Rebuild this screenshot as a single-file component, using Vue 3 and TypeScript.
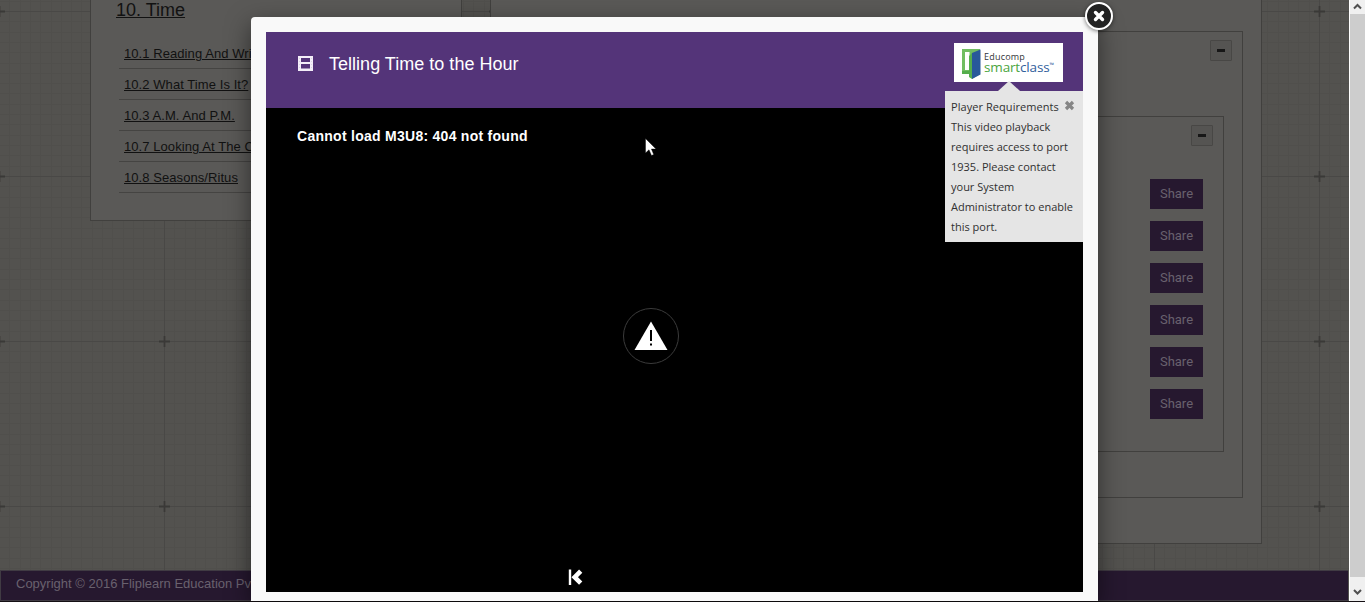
<script setup lang="ts">
const lessons: string[] = [
  '10.1 Reading And Writing Time',
  '10.2 What Time Is It?',
  '10.3 A.M. And P.M.',
  '10.7 Looking At The Calendar',
  '10.8 Seasons/Ritus',
]
const shares = 6
const minor = Array.from({ length: 15 }, (_, i) => ((Math.round((i + 1) * 10.3) + 82) % 165) + 0.5)
</script>

<template>
  <div class="window">
    <div class="page">
      <svg class="paper" width="1349" height="570">
        <defs>
          <pattern id="grid" x="-83" y="-71" width="165" height="165" patternUnits="userSpaceOnUse">
            <g stroke="#504f4c" stroke-width="1">
              <path v-for="m in minor" :key="m" :d="`M${m} 0V165M0 ${m}H165`" />
            </g>
            <path d="M82.5 0V165M0 82.5H165" stroke="#494846" />
            <path d="M77 82.5H88M82.5 77V88" stroke="#3a3937" stroke-width="1.8" />
          </pattern>
        </defs>
        <rect width="1349" height="570" fill="url(#grid)" />
      </svg>
      <main class="columns">
        <section class="chapter">
          <h2><a>10. Time</a></h2>
          <ul>
            <li v-for="l in lessons" :key="l"><a>{{ l }}</a></li>
          </ul>
        </section>
        <section class="content">
          <div class="group">
            <button class="fold"><i></i></button>
            <div class="topic">
              <button class="fold"><i></i></button>
              <div class="shares">
                <button v-for="n in shares" :key="n" class="share">Share</button>
              </div>
            </div>
          </div>
        </section>
      </main>
      <footer>Copyright © 2016 Fliplearn Education Pvt. Ltd.</footer>
    </div>

    <div class="scroll">
      <svg width="15" height="14" viewBox="0 0 15 14"><path d="M4 8.5L7.5 5L11 8.5" /></svg>
      <div class="thumb"></div>
      <svg width="15" height="24" viewBox="0 0 15 24"><path d="M4 13L7.5 16.5L11 13" /></svg>
    </div>

    <div class="modal">
      <header>
        <svg class="film" width="16" height="15" viewBox="0 0 16 15">
          <path d="M0 0H15V15H0Z" fill="#f3eef8" />
          <path d="M3 2H12V6H3ZM3 8H12V12.5H3Z" fill="#543479" />
          <path d="M1.5 2V14M13.5 2V14" stroke="#ddd2e7" stroke-dasharray="1 2" />
        </svg>
        <h1>Telling Time to the Hour</h1>
        <div class="logo">
          <svg width="20" height="32" viewBox="0 0 20 32">
            <path d="M0 0H18V25L10 30V25H0Z" fill="#71bd62" />
            <path d="M3 3H7.5V21H3Z" fill="#fff" />
            <path d="M0 22H7V7L10 4V30L7 28V25H0Z" fill="#55ae4c" />
            <path d="M10 4L18.5 .5V25.5L10 30Z" fill="#28599a" />
          </svg>
          <div class="words">
            <div class="brand">Educomp</div>
            <div class="name"><span>smart</span><span class="class">class</span><span class="tm">™</span></div>
          </div>
        </div>
      </header>
      <div class="video">
        <p class="error">Cannot load M3U8: 404 not found</p>
        <svg class="warn" width="56" height="56" viewBox="0 0 56 56">
          <circle cx="28" cy="28" r="27.5" fill="none" stroke="#3b3b3b" />
          <path d="M28 13.5L44.5 42H11.5Z" fill="#fff" />
          <path d="M27 22H29V33H27ZM27 35.5H29V37.5H27Z" fill="#000" />
        </svg>
        <svg class="prev" width="15" height="17" viewBox="0 0 15 17">
          <path d="M2 .5V16" stroke="#fff" stroke-width="2.4" />
          <path d="M12.7 2.2L6.7 8.2L12.7 14.2" fill="none" stroke="#fff" stroke-width="4.6" />
        </svg>
      </div>
      <aside class="tip">
        <span class="tip-title">Player Requirements</span>
        <svg class="dismiss" width="11" height="11" viewBox="0 0 11 11"><path d="M2 2L9 9M9 2L2 9" stroke="#858585" stroke-width="3.2" /></svg>
        <div>This video playback<br />requires access to port<br />1935. Please contact<br />your System<br />Administrator to enable<br />this port.</div>
      </aside>
      <svg class="close" width="32" height="32" viewBox="0 0 32 32">
        <circle cx="16" cy="16" r="13" fill="#222" stroke="#fff" stroke-width="2" />
        <path d="M12.5 12.5L19.5 19.5M19.5 12.5L12.5 19.5" stroke="#fff" stroke-width="3.4" stroke-linecap="round" />
      </svg>
      <svg class="cursor" width="12" height="19" viewBox="0 0 12 19">
        <path d="M.5 .5V15L4 11.8L6.5 17.5L8.7 16.5L6.4 11H11Z" fill="#fff" stroke="#000" stroke-width=".4" />
      </svg>
    </div>
  </div>
</template>

<style>
html, body { margin: 0; overflow: hidden; background: #151014; }
</style>

<style scoped>
* { box-sizing: border-box; margin: 0; padding: 0; }
.window { position: relative; width: 1365px; height: 602px; overflow: hidden; display: flex; font-family: "Liberation Sans", Arial, sans-serif; background: #151014; }
.page { position: relative; width: 1349px; height: 601px; background: #53524f; display: flex; flex-direction: column; }
.paper { position: absolute; left: 0; top: 0; }
.columns { position: relative; height: 570px; display: flex; align-items: flex-start; gap: 28px; padding-left: 90px; }
.chapter, .content { background: #5a5957; border: 1px solid #41403e; border-top: 0; }
.chapter { width: 372px; height: 221px; padding-left: 25px; }
h2 { font-size: 18px; font-weight: 400; line-height: 21px; color: #121212; text-decoration: underline; }
ul { list-style: none; margin: 17px 0 0 3px; }
li { height: 31px; border-bottom: 1px solid #454442; padding: 8px 0 0 5px; font-size: 13px; line-height: 16px; color: #111; white-space: nowrap; text-decoration: underline; letter-spacing: .07px; }
.content { width: 772px; height: 544px; padding: 31px 18px 0; }
.group { height: 467px; border: 1px solid #41403e; padding: 8px 10px 0 18px; display: flex; flex-direction: column; align-items: flex-end; }
.topic { align-self: stretch; height: 336px; margin: 55px 8px 0 0; border: 1px solid #41403e; padding: 8px 10px 0; display: flex; flex-direction: column; align-items: flex-end; }
.fold { width: 22px; height: 21px; border: 1px solid #484745; border-radius: 1px; background: #555452; display: flex; align-items: center; justify-content: center; flex: none; }
.fold i { width: 8px; height: 3px; background: #171717; }
.shares { display: flex; flex-direction: column; gap: 12px; margin: 33px 10px 0 0; }
.share { width: 53px; height: 30px; border: 0; background: #26182f; color: #69616e; font: 13px/30px Roboto, sans-serif; }
footer { position: relative; width: 1348px; height: 31px; border: 1px solid #403b43; border-right: 0; background: #26182f; color: #69616e; padding-left: 15px; font-size: 13px; line-height: 26px; white-space: nowrap; }
.scroll { width: 16px; height: 601px; border-left: 1px solid #fff; background: #f0f0f0; display: flex; flex-direction: column; }
.scroll path { fill: none; stroke: #505050; stroke-width: 2; }
.scroll svg { display: block; flex: none; }
.thumb { height: 564px; background: #cdcdcd; }
.modal { position: absolute; left: 251px; top: 17px; width: 847px; height: 584px; padding: 15px 15px 9px; background: #f9f9f9; border-radius: 4px 4px 0 0; box-shadow: 0 8px 24px rgba(0, 0, 0, .5); }
header { height: 76px; background: #543479; display: flex; align-items: flex-start; padding: 11px 20px 0 32px; }
.film { margin-top: 13px; }
h1 { margin-left: 15px; margin-top: 11px; font-size: 18px; font-weight: 400; line-height: 21px; color: #fff; letter-spacing: .02px; }
.logo { margin-left: auto; width: 109px; height: 39px; background: #fff; display: flex; padding: 6px 0 0 8px; font-family: "Open Sans", sans-serif; }
.words { margin: 2px 0 0 2px; white-space: nowrap; }
.brand { height: 9px; font-size: 9px; font-weight: 500; line-height: 11px; color: #333539; letter-spacing: .2px; }
.name { display: flex; height: 14px; font-size: 13.5px; font-weight: 500; line-height: 14px; color: #4aa53e; letter-spacing: -.15px; }
.class { color: #315e9c; }
.tm { color: #315e9c; font-size: 6px; line-height: 10px; }
.video { height: 484px; background: #000; display: flex; flex-direction: column; }
.error { color: #fff; font-size: 14px; font-weight: 700; line-height: 16px; margin: 20px 0 0 31px; letter-spacing: .27px; }
.warn { margin: 164px 0 0 357px; }
.prev { margin: 205px 0 0 302px; }
.tip { position: absolute; left: 694px; top: 74px; width: 138px; height: 151px; padding: 6px 0 0 6px; background: #e5e5e5; color: #303030; font: 11px/20px "Open Sans", "Noto Sans", sans-serif; white-space: nowrap; }
.tip::before { content: ""; position: absolute; left: 53px; top: -10px; border: 11px solid transparent; border-top: 0; border-bottom: 10px solid #e5e5e5; }
.tip-title { display: block; height: 20px; letter-spacing: .06px; }
.dismiss { position: absolute; left: 119px; top: 9px; }
.close { position: absolute; left: 832px; top: -17px; filter: drop-shadow(0 1px 2px #0008); }
.cursor { position: absolute; left: 394px; top: 121px; }
</style>
